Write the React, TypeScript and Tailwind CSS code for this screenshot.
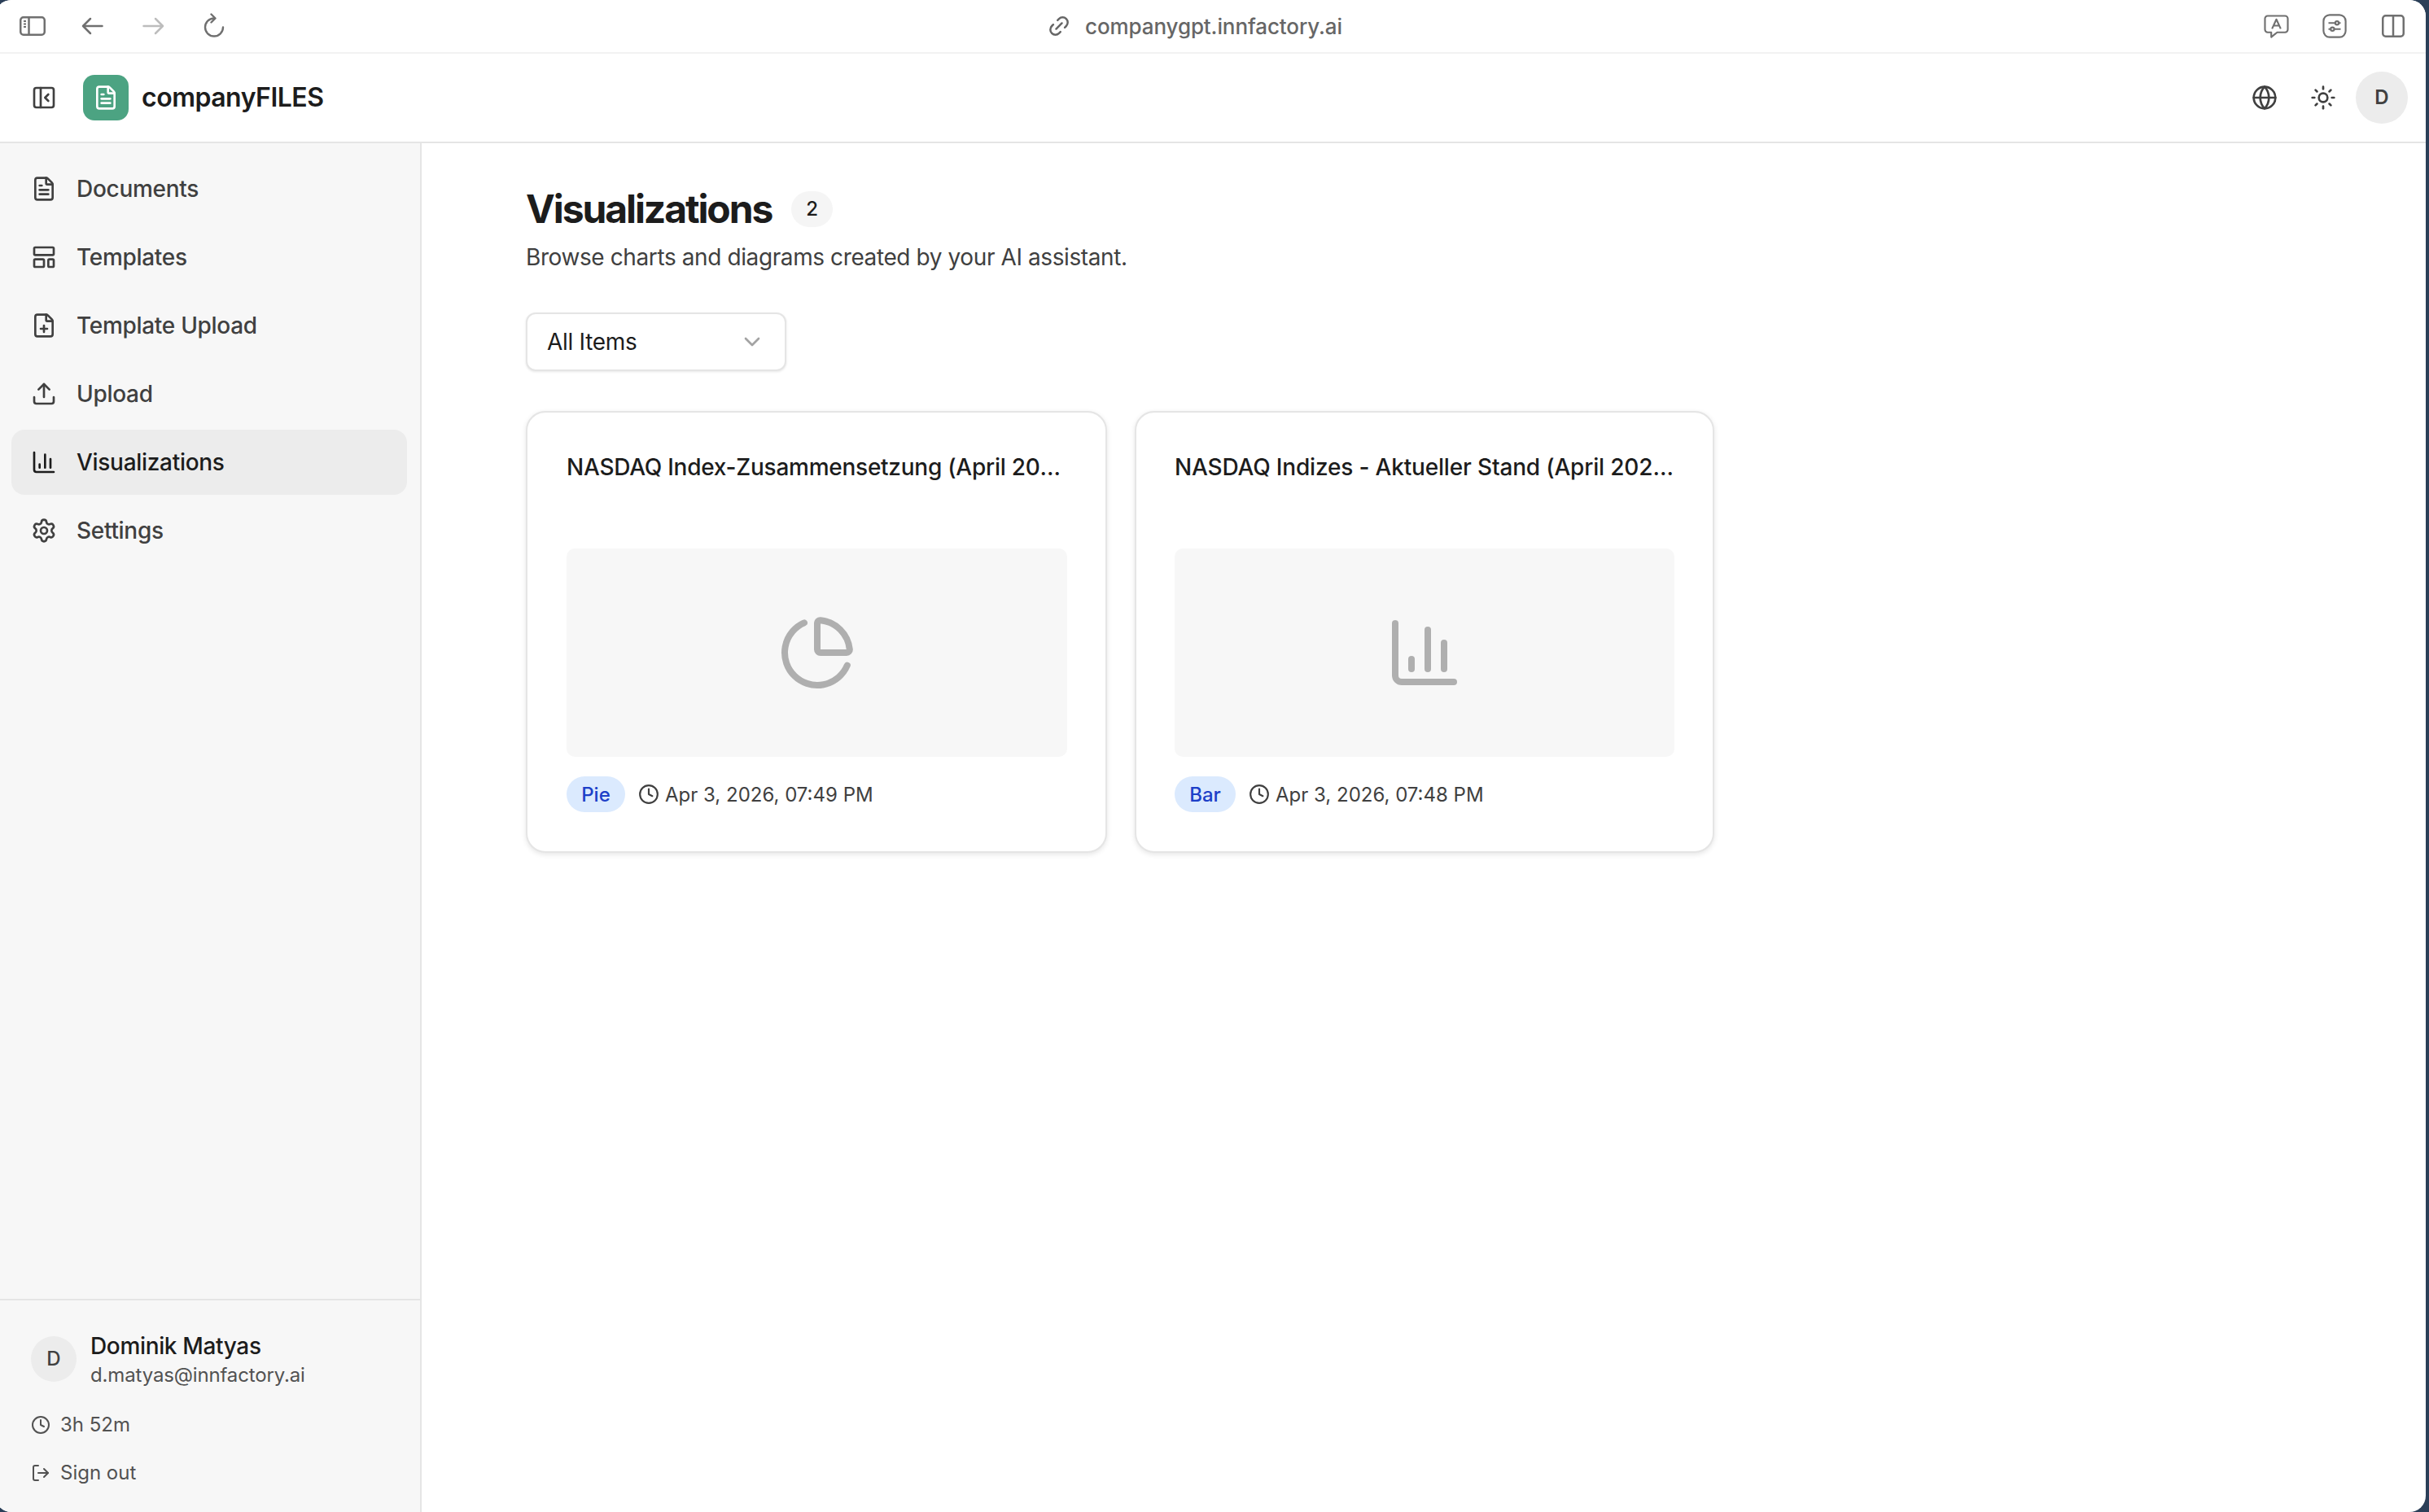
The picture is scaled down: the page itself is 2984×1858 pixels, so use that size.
import React from "react";
import {
  Link2, PanelLeftClose, FileText, LayoutTemplate, FilePlus, Upload,
  ChartColumn, Settings, Globe, Sun, Clock, LogOut, ChevronDown, ChartPie,
} from "lucide-react";

function SafariSidebar() {
  return (
    <svg width="32" height="24" viewBox="0 0 32 24" fill="none" stroke="#707070" strokeWidth="2.5">
      <rect x="1.25" y="1.25" width="29.5" height="21.5" rx="3.5" />
      <path d="M11.5 1.5v21" />
      <path d="M5 6h3M5 9.5h3M5 13h3" strokeWidth="2" />
    </svg>
  );
}

function SafariArrow({ color, flip }: { color: string; flip?: boolean }) {
  return (
    <svg width="27" height="22" viewBox="0 0 27 22" fill="none" stroke={color} strokeWidth="2.5" strokeLinecap="round" strokeLinejoin="round" className={flip ? "-scale-x-100" : ""}>
      <path d="M25.5 11H2M11 2l-9 9 9 9" />
    </svg>
  );
}

function SafariReload() {
  return (
    <svg width="26" height="30" viewBox="0 0 26 30" fill="none" stroke="#707070" strokeWidth="2.4" strokeLinecap="round" strokeLinejoin="round">
      <path d="M13 6.5A11 11 0 1 0 24 17.5" />
      <path d="M9.5 1.5l5 5-5 5" />
    </svg>
  );
}

function SafariChat() {
  return (
    <svg width="31" height="29" viewBox="0 0 32 30" fill="none" stroke="#707070" strokeWidth="2.2" strokeLinejoin="round">
      <path d="M5 1.5h22a3.5 3.5 0 0 1 3.5 3.5v14a3.5 3.5 0 0 1-3.5 3.5H17l-7.5 6v-6H5A3.5 3.5 0 0 1 1.5 19V5A3.5 3.5 0 0 1 5 1.5z" />
      <path d="M10.5 18L16 6l5.5 12M12.3 14h7.4" />
    </svg>
  );
}

function SafariSliders() {
  return (
    <svg width="30" height="30" viewBox="0 0 32 32" fill="none" stroke="#707070" strokeWidth="2.3">
      <rect x="1.5" y="1.5" width="29" height="29" rx="8" />
      <path d="M8 12h9M21.5 12H24M8 20h3M15.5 20H24" />
      <circle cx="19.2" cy="12" r="2.3" />
      <circle cx="13.2" cy="20" r="2.3" />
    </svg>
  );
}

function SafariSplit() {
  return (
    <svg width="28" height="28" viewBox="0 0 28 28" fill="none" stroke="#707070" strokeWidth="2.5">
      <rect x="1.25" y="1.25" width="25.5" height="25.5" rx="3.5" />
      <path d="M14 1.5v25" />
    </svg>
  );
}

const nav = [
  { label: "Documents", icon: FileText },
  { label: "Templates", icon: LayoutTemplate },
  { label: "Template Upload", icon: FilePlus },
  { label: "Upload", icon: Upload },
  { label: "Visualizations", icon: ChartColumn, active: true },
  { label: "Settings", icon: Settings },
];

function Card({ title, kind, time, box, titleClass, icon: Icon, badgeWidth }: { title: string; kind: string; time: string; box: string; titleClass: string; icon: any; badgeWidth: string }) {
  return (
    <div className={`${box} h-[543px] rounded-[24px] border-2 border-[#e5e5e5] bg-white py-[48px] shadow-[0_2px_6px_rgba(0,0,0,0.1)]`}>
      <div className={`${titleClass} -mt-[1px] truncate text-[28px] leading-[40px] font-medium text-[#1c1c1c]`}>{title}</div>
      <div className="mt-[80px] flex h-[256px] items-center justify-center rounded-[10px] bg-[#f7f7f7]">
        <Icon size={96} strokeWidth={2} color="#afafaf" />
      </div>
      <div className="mt-[24px] flex h-[44px] items-center">
        <span className={`${badgeWidth} flex h-[44px] items-center justify-center rounded-full bg-[#dbeafe] pt-[1px] text-[24px] font-medium text-[#1d40c8]`}>{kind}</span>
        <Clock size={26} strokeWidth={2} color="#404040" className="ml-[16px]" />
        <span className="ml-[7px] pt-[1px] text-[24px] whitespace-nowrap text-[#404040]">{time}</span>
      </div>
    </div>
  );
}

export default function App() {
  return (
    <div className="h-[1858px] w-[2984px] overflow-hidden bg-[#2b3f58] font-['Inter',sans-serif]">
      <div className="-ml-[6px] flex h-[1858px] w-[2986px] flex-col overflow-hidden rounded-[20px] bg-white">
        {/* Browser bar */}
        <div className="relative flex h-[66px] shrink-0 items-center border-b-2 border-[#f2f2f2] bg-white">
          <div className="ml-[30px] flex items-center">
            <SafariSidebar />
            <div className="ml-[44px]"><SafariArrow color="#707070" /></div>
            <div className="ml-[48px]"><SafariArrow color="#bdbdbd" flip /></div>
            <div className="ml-[48px] -mt-[2px]"><SafariReload /></div>
          </div>
          <div className="absolute top-0 left-[1292px] flex h-[64px] items-center">
            <Link2 size={30} strokeWidth={2} color="#666666" className="-rotate-45" />
            <span className="ml-[17px] text-[26px] font-medium tracking-[-0.1px] text-[#666666]">companygpt.innfactory.ai</span>
          </div>
          <div className="ml-auto flex items-center pr-[26px]">
            <SafariChat />
            <div className="ml-[41px]"><SafariSliders /></div>
            <div className="ml-[43px]"><SafariSplit /></div>
          </div>
        </div>

        {/* App header */}
        <div className="flex h-[110px] shrink-0 items-center border-b-2 border-[#e5e5e5] bg-white">
          <PanelLeftClose size={32} strokeWidth={2} color="#404040" className="ml-[44px]" />
          <div className="ml-[32px] flex h-[56px] w-[56px] items-center justify-center rounded-[14px] bg-[#4ca382]">
            <FileText size={32} strokeWidth={2} color="#ffffff" />
          </div>
          <span className="ml-[16px] text-[32px] font-semibold tracking-[-0.5px] text-[#1c1c1c]">companyFILES</span>
          <div className="ml-auto flex items-center pr-[22px]">
            <Globe size={32} strokeWidth={2} color="#404040" />
            <Sun size={32} strokeWidth={2} color="#404040" className="ml-[40px]" />
            <div className="ml-[24px] flex h-[64px] w-[64px] items-center justify-center rounded-full bg-[#ececec] text-[24px] font-semibold text-[#404040]">D</div>
          </div>
        </div>

        <div className="flex min-h-0 flex-1">
          {/* Sidebar */}
          <aside className="flex w-[524px] shrink-0 flex-col border-r-2 border-[#e5e5e5] bg-[#f7f7f7]">
            <nav className="flex flex-1 flex-col gap-[4px] pt-[16px] pr-[16px] pl-[20px]">
              {nav.map((n) => (
                <div key={n.label} className={`flex h-[80px] items-center gap-[24px] rounded-[16px] pl-[24px] text-[28px] font-medium tracking-[-0.3px] ${n.active ? "bg-[#ececec] text-[#1c1c1c]" : "text-[#404040]"}`}>
                  <n.icon size={32} strokeWidth={2} color={n.active ? "#1c1c1c" : "#404040"} />
                  <span>{n.label}</span>
                </div>
              ))}
            </nav>
            <div className="h-[262px] shrink-0 border-t-2 border-[#e5e5e5] pt-[34px] pl-[44px]">
              <div className="flex items-center gap-[17px]">
                <div className="flex h-[56px] w-[56px] items-center justify-center rounded-full bg-[#ececec] text-[24px] font-medium text-[#404040]">D</div>
                <div className="mt-[4px] flex flex-col">
                  <span className="text-[28px] leading-[36px] font-medium tracking-[-0.35px] text-[#1c1c1c]">Dominik Matyas</span>
                  <span className="text-[24px] leading-[36px] tracking-[-0.15px] text-[#525252]">d.matyas@innfactory.ai</span>
                </div>
              </div>
              <div className="mt-[23px] flex h-[40px] items-center gap-[12px] text-[24px] text-[#525252]">
                <Clock size={24} strokeWidth={2} color="#525252" />
                <span>3h 52m</span>
              </div>
              <div className="mt-[19px] flex h-[40px] items-center gap-[12px] text-[24px] text-[#525252]">
                <LogOut size={24} strokeWidth={2} color="#525252" />
                <span>Sign out</span>
              </div>
            </div>
          </aside>

          {/* Main */}
          <main className="flex-1 pt-[56px] pl-[128px]">
            <div className="flex h-[50px] items-center">
              <h1 className="text-[48px] leading-[50px] font-bold tracking-[-2.1px] text-[#1c1c1c]">Visualizations</h1>
              <span className="ml-[24px] flex h-[44px] w-[51px] items-center justify-center rounded-full bg-[#f5f5f5] text-[24px] font-medium text-[#1c1c1c]">2</span>
            </div>
            <p className="mt-[14px] text-[28px] leading-[40px] tracking-[-0.4px] text-[#404040]">Browse charts and diagrams created by your AI assistant.</p>
            <div className="mt-[48px] flex h-[72px] w-[320px] items-center justify-between rounded-[12px] border-2 border-[#e5e5e5] bg-white px-[24px] text-[28px] tracking-[-0.3px] text-[#1c1c1c] shadow-[0_1px_3px_rgba(0,0,0,0.1)]">
              <span>All Items</span>
              <ChevronDown size={32} strokeWidth={2} color="#a3a3a3" />
            </div>
            <div className="mt-[49px] flex gap-[34px]">
              <Card title="NASDAQ Index-Zusammensetzung (April 2026)" kind="Pie" time="Apr 3, 2026, 07:49 PM" box="w-[714px] pl-[48px] pr-[47px]" titleClass="tracking-[-0.25px]" icon={ChartPie} badgeWidth="w-[72px]" />
              <Card title="NASDAQ Indizes - Aktueller Stand (April 2026)" kind="Bar" time="Apr 3, 2026, 07:48 PM" box="w-[712px] px-[47px]" titleClass="tracking-[-0.17px]" icon={ChartColumn} badgeWidth="w-[75px]" />
            </div>
          </main>
        </div>
      </div>
    </div>
  );
}
